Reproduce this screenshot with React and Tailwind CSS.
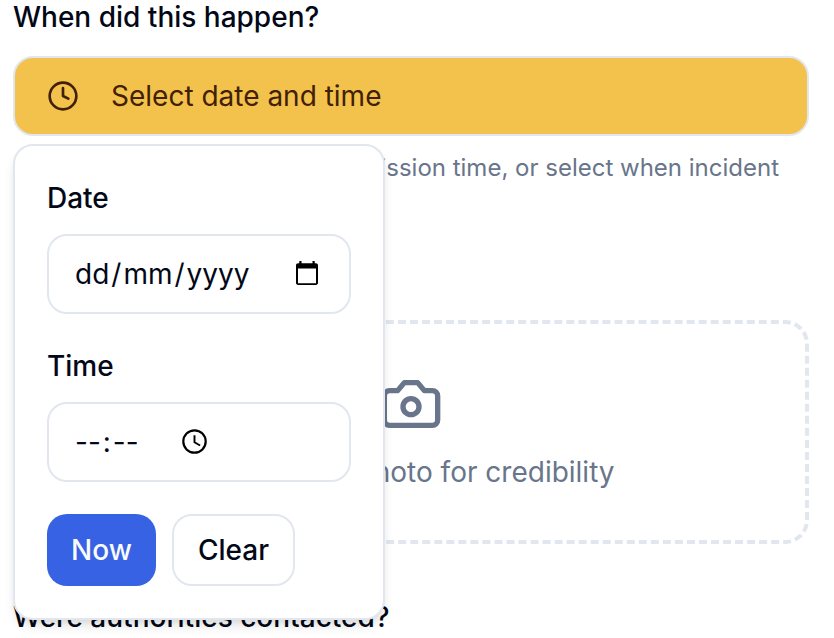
import React from 'react';

function ClockIcon() {
  return (
    <svg className="size-8 shrink-0" viewBox="0 0 24 24" fill="none" stroke="currentColor" strokeWidth="2" strokeLinecap="round" strokeLinejoin="round">
      <circle cx="12" cy="12" r="10" />
      <path d="M12 6v6l4 2" />
    </svg>
  );
}

function CameraIcon() {
  return (
    <svg className="size-16" viewBox="0 0 24 24" fill="none" stroke="currentColor" strokeWidth="2" strokeLinecap="round" strokeLinejoin="round">
      <path d="M14.5 4h-5L7 7H4a2 2 0 0 0-2 2v9a2 2 0 0 0 2 2h16a2 2 0 0 0 2-2V9a2 2 0 0 0-2-2h-3l-2.5-3z" />
      <circle cx="12" cy="13" r="3" />
    </svg>
  );
}

function DateGlyph() {
  return (
    <svg className="h-[24px] w-[22px]" viewBox="0 0 22 24" fill="none">
      <path d="M3.300 0h2.200v2.200h11V0h2.200v2.200h1.100c1.300 0 2.200.9 2.200 2.200v17.400c0 1.300-.9 2.200-2.200 2.200H2.200C.9 24 0 23.100 0 21.800V4.400C0 3.100.9 2.200 2.200 2.200h1.100zM2 7.600v14.600h18V7.600z" fill="#000" fillRule="evenodd" />
    </svg>
  );
}

function TimeGlyph() {
  return (
    <svg className="-mt-px size-[25px]" viewBox="0 0 25 25" fill="none" stroke="#000">
      <circle cx="12.5" cy="12.5" r="11.2" strokeWidth="2.2" />
      <path d="M12.5 6.3v6.900l5.600 3.300" strokeWidth="1.9" />
    </svg>
  );
}

function Popover() {
  return (
    <div className="absolute top-[88px] left-0 z-10 flex h-[476px] w-[372px] flex-col gap-8 rounded-[20px] border-2 border-[#e2e7ef] bg-white p-8 shadow-[0_8px_12px_-2px_rgba(0,0,0,0.1),0_4px_8px_-4px_rgba(0,0,0,0.1)]">
      <div className="flex flex-col gap-4">
        <div className="leading-[40px] font-medium">Date</div>
        <div className="flex h-[80px] w-[304px] items-center justify-between rounded-[20px] border-2 border-[#e2e7ef] pr-[31px] pl-6">
          <div className="flex leading-[40px]">
            <span className="px-0.5">dd</span>
            <span>/</span>
            <span className="px-0.5">mm</span>
            <span>/</span>
            <span className="px-0.5">yyyy</span>
          </div>
          <div className="-mt-0.5"><DateGlyph /></div>
        </div>
      </div>
      <div className="flex flex-col gap-4">
        <div className="leading-[40px] font-medium">Time</div>
        <div className="flex h-[80px] w-[304px] items-center rounded-[20px] border-2 border-[#e2e7ef] pl-6">
          <div className="flex w-[109px] leading-[40px]">
            <span className="px-0.5">--</span>
            <span>:</span>
            <span className="px-0.5">--</span>
          </div>
          <TimeGlyph />
        </div>
      </div>
      <div className="flex gap-4 font-medium">
        <button className="h-[72px] w-[109px] rounded-[20px] bg-[#3662e3] text-[#f8fafc]">Now</button>
        <button className="h-[72px] w-[123px] rounded-[20px] border-2 border-[#e2e7ef] bg-white">Clear</button>
      </div>
    </div>
  );
}

export default function App() {
  return (
    <div className="h-[638px] w-[834px] overflow-hidden bg-white pt-[3px] pr-[25px] pl-[13px] font-['Inter',sans-serif] text-[28px] text-[#020817] [font-optical-sizing:none]">
      <div className="mb-[25px] leading-[28px] font-medium">When did this happen?</div>
      <div className="relative">
        <button className="flex h-[80px] w-full items-center gap-8 rounded-[20px] border-2 border-[#e2e7ef] bg-[#f3c24c] px-8 text-[#422006]">
          <ClockIcon />
          <span>Select date and time</span>
        </button>
        <Popover />
      </div>
      <p className="mt-4 h-16 w-[766px] text-right text-[24px] leading-[32px] whitespace-nowrap text-[#68758b]">
        Leave empty to use submission time, or select when incident
      </p>
      <div className="mt-[104px] flex h-[224px] flex-col items-center gap-4 rounded-[24px] border-4 border-dashed border-[#e2e7ef] pt-12 text-[#68758b]">
        <CameraIcon />
        <div className="pl-[23px] leading-[40px] whitespace-nowrap">Upload a photo for credibility</div>
      </div>
      <div className="mt-[59px] leading-[28px] font-medium whitespace-nowrap">Were authorities contacted?</div>
    </div>
  );
}
